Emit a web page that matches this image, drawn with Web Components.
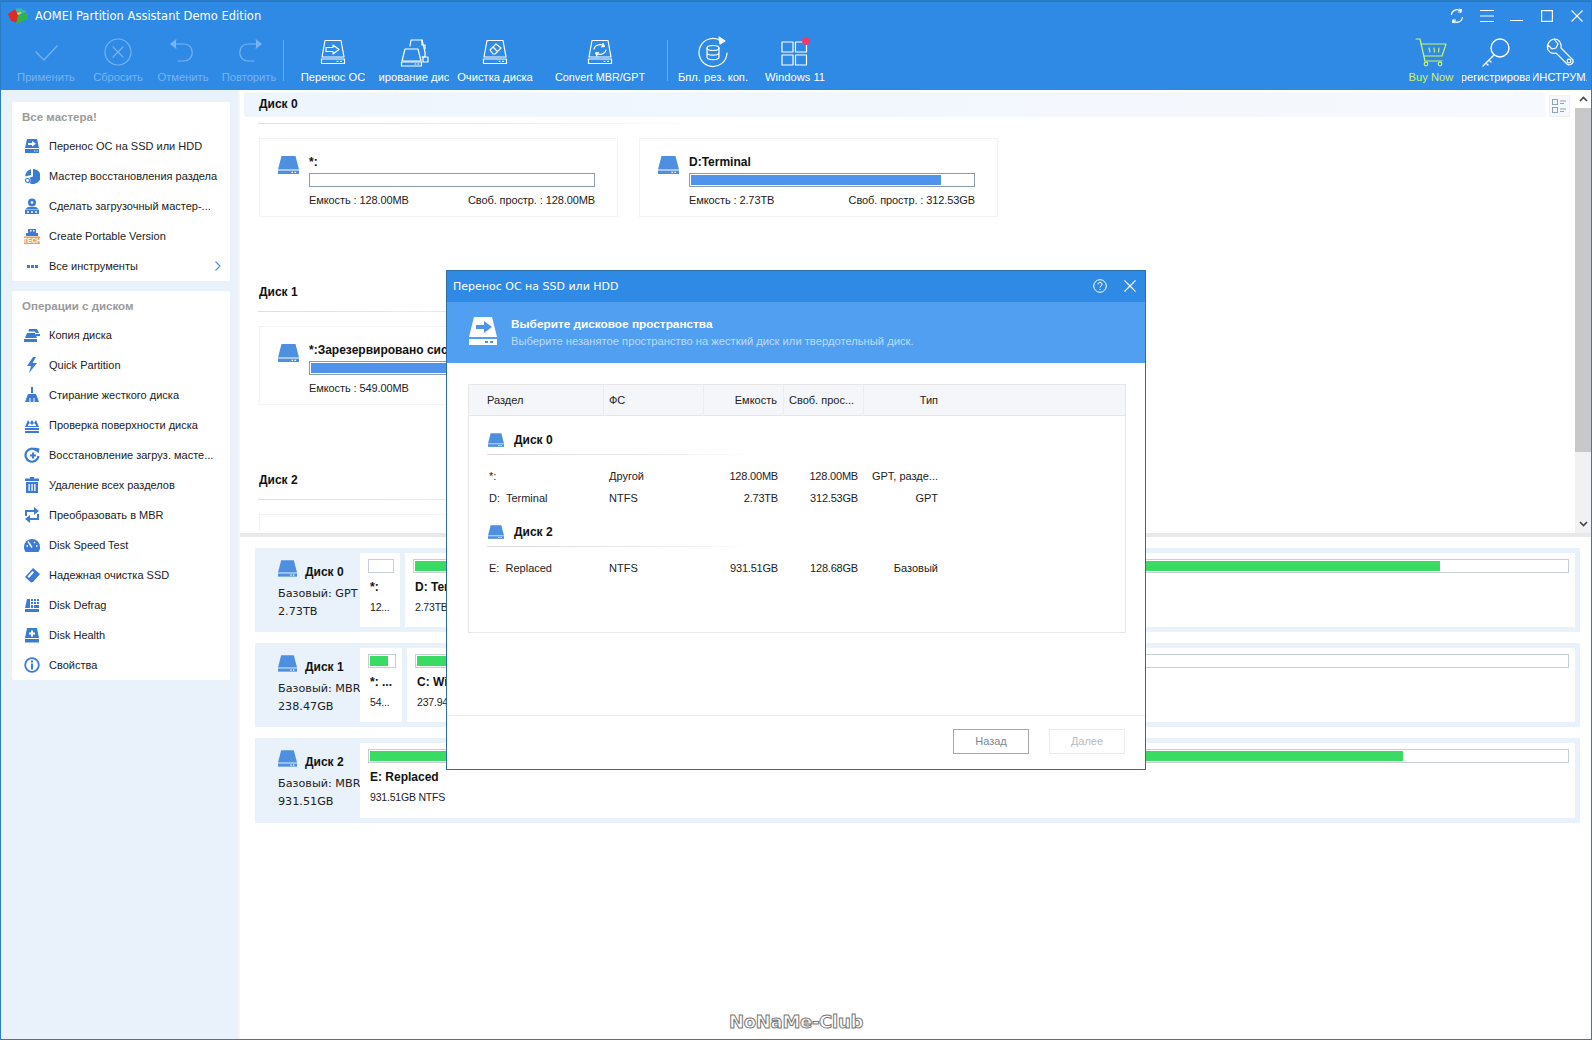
<!DOCTYPE html>
<html lang="ru">
<head>
<meta charset="utf-8">
<title>AOMEI Partition Assistant</title>
<style>
  html, body { margin: 0; padding: 0; background: #fff; }
  body { font: 11px "Liberation Sans", sans-serif; color: #222; }
</style>
</head>
<body>
<partition-app>
  <app-titlebar slot="top">AOMEI Partition Assistant Demo Edition</app-titlebar>
  <app-toolbar slot="top">
    <tool-item icon="check" off style="width:64px;margin-left:14px">Применить</tool-item>
    <tool-item icon="cancel" off style="width:64px;margin-left:8px">Сбросить</tool-item>
    <tool-item icon="undo" off style="width:64px;margin-left:1px">Отменить</tool-item>
    <tool-item icon="redo" off style="width:64px;margin-left:2px">Повторить</tool-item>
    <tool-sep style="margin-left:2px"></tool-sep>
    <tool-item icon="migrate" style="width:64px;margin-left:17px">Перенос ОС</tool-item>
    <tool-item icon="clone" style="width:70px;margin-left:14px">ирование дис</tool-item>
    <tool-item icon="wipe" style="width:76px;margin-left:8px">Очистка диска</tool-item>
    <tool-item icon="convert" style="width:92px;margin-left:21px;font-size:10.8px">Convert MBR/GPT</tool-item>
    <tool-sep style="margin-left:21px"></tool-sep>
    <tool-item icon="backup" style="width:74px;margin-left:8px">Бпл. рез. коп.</tool-item>
    <tool-item icon="win" style="width:60px;margin-left:15px">Windows 11</tool-item>
    <tool-item icon="cart" accent style="width:46px;margin-left:auto">Buy Now</tool-item>
    <tool-item icon="key" style="width:68px;margin-left:8px">регистрирова</tool-item>
    <tool-item icon="wrench" style="width:54px;margin-left:3px;margin-right:5px">ИНСТРУМ.</tool-item>
  </app-toolbar>

  <app-sidebar slot="side">
    <side-card title="Все мастера!">
      <side-row icon="sMigrate">Перенос ОС на SSD или HDD</side-row>
      <side-row icon="sPie">Мастер восстановления раздела</side-row>
      <side-row icon="sBoot">Сделать загрузочный мастер-...</side-row>
      <side-row icon="sTech">Create Portable Version</side-row>
      <side-row icon="sDots" more>Все инструменты</side-row>
    </side-card>
    <side-card title="Операции с диском">
      <side-row icon="sCopy">Копия диска</side-row>
      <side-row icon="sBolt">Quick Partition</side-row>
      <side-row icon="sBroom">Стирание жесткого диска</side-row>
      <side-row icon="sSurface">Проверка поверхности диска</side-row>
      <side-row icon="sRestore">Восстановление загруз. масте...</side-row>
      <side-row icon="sTrash">Удаление всех разделов</side-row>
      <side-row icon="sSwap">Преобразовать в MBR</side-row>
      <side-row icon="sGauge">Disk Speed Test</side-row>
      <side-row icon="sEraser">Надежная очистка SSD</side-row>
      <side-row icon="sDefrag">Disk Defrag</side-row>
      <side-row icon="sHealth">Disk Health</side-row>
      <side-row icon="sInfo">Свойства</side-row>
    </side-card>
  </app-sidebar>

  <top-pane slot="main">
    <disk-section title="Диск 0" band>
      <part-card name="*:" fill="0" size="128.00MB" free="128.00MB"></part-card>
      <part-card name="D:Terminal" fill="88.5" size="2.73TB" free="312.53GB"></part-card>
    </disk-section>
    <disk-section title="Диск 1">
      <part-card name="*:Зарезервировано системой" fill="75" size="549.00MB" free="120.00MB"></part-card>
    </disk-section>
    <disk-section title="Диск 2">
      <part-card></part-card>
    </disk-section>
  </top-pane>

  <bottom-pane slot="main">
    <disk-map name="Диск 0" kind="Базовый: GPT" cap="2.73TB" h="84">
      <map-part style="width:40px" name="*:" info="12..." fill="0"></map-part>
      <map-part style="flex:1" name="D: Terminal" info="2.73TB NTFS" fill="89"></map-part>
    </disk-map>
    <disk-map name="Диск 1" kind="Базовый: MBR" cap="238.47GB" h="84">
      <map-part style="width:42px" name="*: ..." info="54..." fill="75"></map-part>
      <map-part style="flex:1" name="C: Windows" info="237.94GB NTFS" fill="40"></map-part>
    </disk-map>
    <disk-map name="Диск 2" kind="Базовый: MBR" cap="931.51GB" h="85">
      <map-part style="flex:1" wide name="E: Replaced" info="931.51GB NTFS" fill="86.3"></map-part>
    </disk-map>
  </bottom-pane>

  <migrate-dialog slot="over" title="Перенос ОС на SSD или HDD"
    heading="Выберите дисковое пространства"
    sub="Выберите незанятое пространство на жесткий диск или твердотельный диск.">
    <table-group name="Диск 0" style="margin-top:16px"></table-group>
    <table-line style="margin-top:10px" a="*:" b="Другой" c="128.00MB" d="128.00MB" e="GPT, разде..."></table-line>
    <table-line a="D:  Terminal" b="NTFS" c="2.73TB" d="312.53GB" e="GPT"></table-line>
    <table-group name="Диск 2" style="margin-top:15px"></table-group>
    <table-line style="margin-top:10px" a="E:  Replaced" b="NTFS" c="931.51GB" d="128.68GB" e="Базовый"></table-line>
  </migrate-dialog>
  <water-mark slot="over">NoNaMe-Club</water-mark>
</partition-app>

<script>
const line = (inner, w) => `<g fill="none" stroke="currentColor" stroke-width="${w || 1.2}" stroke-linecap="round" stroke-linejoin="round">${inner}</g>`;
const diskOutline = `<path d="M8 4.5H24L27 21H5Z"/><rect x="4.5" y="23" width="23" height="4.5"/><path d="M20 25.3h1M23.5 25.3h1"/>`;

const toolIcons = {
  check: line(`<path d="M6 16l8 8L27 10"/>`),
  cancel: line(`<circle cx="16" cy="16" r="13"/><path d="M11 11l10 10M21 11L11 21"/>`),
  undo: line(`<path d="M4 8H17C28 8 28 25 17 25H11"/><path d="M9 4L4 8l5 4" fill="currentColor"/>`),
  redo: line(`<path d="M28 8H15C4 8 4 25 15 25H21"/><path d="M23 4l5 4-5 4" fill="currentColor"/>`),
  migrate: line(diskOutline + `<path d="M9 11.5h7V9l6 4.5-6 4.5v-2.5H9Z"/>`),
  clone: line(`<path d="M7 13H20L23 25H4Z"/><rect x="3.500" y="26" width="20" height="4"/><path d="M17 28h1M20 28h1"/><path d="M12 10L13 4H24L27 16V21H24"/><path d="M24 4V9H27V13"/><rect x="25" y="21" width="5" height="5"/>`),
  wipe: line(diskOutline + `<path d="M11 14l6-6 5 4-6 6h-2Z"/><path d="M14 11l4 4"/>`),
  convert: line(diskOutline + `<path d="M10 13a6 5 0 0 1 10-3"/><path d="M22 14a6 5 0 0 1-10 3"/><path d="M19 7.500l1.500 3-3 .5" fill="currentColor"/><path d="M13 20l-1.500-3 3-.5" fill="currentColor"/>`),
  backup: line(`<path d="M24 5A14 14 0 1 0 30 17"/><path d="M22 1l6 4-5 3Z" fill="currentColor"/><ellipse cx="16" cy="12" rx="6" ry="2.500"/><path d="M10 12v9c0 3.500 12 3.500 12 0v-9M10 16.500c0 3.500 12 3.500 12 0"/>`),
  win: line(`<rect x="3" y="6" width="11" height="10"/><rect x="16.500" y="6" width="11" height="10"/><rect x="3" y="19" width="11" height="10"/><rect x="16.500" y="19" width="11" height="10"/>`) + `<circle cx="27" cy="5" r="4" fill="#f23a6a"/>`,
  cart: line(`<path d="M1 3H5L10 25H27"/><path d="M6 8H31L27 20H9"/><path d="M14 12l1 4M19 12l.5 4M24 12l-.5 4"/><circle cx="11" cy="28" r="1.800"/><circle cx="25" cy="28" r="1.800"/>`),
  key: line(`<circle cx="20" cy="12" r="9"/><path d="M14 19L3 30M6 27l2 2M9 24l2 2"/>`, 1.4),
  wrench: line(`<path d="M11 3a8 8 0 0 0-7 11c2 3 5 4 8 3l11 11c2 2 7 0 6-4L17 12c1-4-2-9-6-9l-1 0 4 5-2 4-4 1-4-4"/><circle cx="25" cy="25" r="1.800"/>`)
};

const F = 'fill="#3b7bd4"';
const sideIcons = {
  sMigrate: `<path ${F} d="M3 1H13L15 10H1Z"/><path fill="#fff" d="M4 5h4V3l4 2.700-4 2.700V7H4Z"/><rect ${F} x="1" y="11" width="14" height="4"/><path fill="#fff" d="M10 12.500h1.200v1H10ZM12.500 12.500h1.200v1h-1.200Z"/>`,
  sPie: `<path ${F} d="M9 1A7.500 7.500 0 1 1 2 11L9 8.500Z"/><path ${F} d="M7 1.200V7L1.300 8.500A7 7 0 0 1 7 1.200Z"/><circle cx="3.500" cy="12.500" r="3" fill="#fff"/><circle cx="3.500" cy="12.500" r="2" fill="none" stroke="#3b7bd4" stroke-width="1.200"/>`,
  sBoot: `<circle ${F} cx="8" cy="4.500" r="4"/><circle cx="8" cy="4.500" r="1.300" fill="#fff"/><path ${F} d="M4 9h8l3 2.500H1Z"/><rect ${F} x="1" y="12" width="14" height="4"/><path fill="#fff" d="M3 13.300h2v1.400H3ZM7 13.300h2v1.400H7ZM11 13.300h2v1.400h-2Z"/>`,
  sTech: `<path ${F} d="M4 1h8v4h2v3H2V5h2Z"/><path fill="#fff" d="M6 2h1.500v1.500H6ZM9 2h1.500v1.500H9Z"/><rect fill="#eda23f" x="0" y="8.500" width="16" height="7.500"/><text x="8" y="15" text-anchor="middle" font-size="6.500" font-weight="700" font-family="Liberation Sans" fill="#fff">TECH</text>`,
  sDots: `<rect ${F} x="3" y="7" width="3" height="3"/><rect ${F} x="7" y="7" width="3" height="3"/><rect ${F} x="11" y="7" width="3" height="3"/>`,
  sCopy: `<path ${F} d="M3 6H11L13 11H1Z"/><rect ${F} x="0" y="12" width="13" height="3"/><path ${F} d="M5 2H13L15 6H12L11 4.500H4.500Z"/><rect ${F} x="12" y="7" width="4" height="2"/>`,
  sBolt: `<path ${F} d="M9 0L3 9H7L5 16L13 6H8.500L12 0Z"/>`,
  sBroom: `<path ${F} d="M7 0h2v6H7Z"/><path ${F} d="M4 7h8l3 8H1Z"/><path fill="#fff" d="M5.500 11h1v4h-1ZM9.500 11h1v4h-1Z"/>`,
  sSurface: `<path ${F} d="M1 10L4 3l2 3 2-3 2 3 2-3 3 7Z"/><path fill="#fff" d="M4 8l2-2 2 2 2-2 2 2v1H4Z"/><rect ${F} x="1" y="11" width="14" height="2"/><rect ${F} x="1" y="14" width="14" height="2"/>`,
  sRestore: `<path fill="none" stroke="#3b7bd4" stroke-width="2.200" d="M13 4A6.500 6.500 0 1 0 14.500 9"/><path ${F} d="M10 .500l5.500 1-1 5Z"/><path ${F} d="M6 7.500h2V5.500h2v2h2v2h-2v2H8v-2H6Z"/>`,
  sTrash: `<path ${F} d="M6 0h4v1.500h5V4H1V1.500h5Z"/><path ${F} d="M2 5h12v11H2Z"/><path fill="#fff" d="M4.500 7h1.300v7H4.500ZM7.400 7h1.300v7H7.400ZM10.200 7h1.300v7h-1.300Z"/>`,
  sSwap: `<path fill="none" stroke="#3b7bd4" stroke-width="2" d="M2 9V4H11M14 7v5H5"/><path ${F} d="M10 0l5 4-5 4ZM6 8l-5 4 5 4Z"/>`,
  sGauge: `<path ${F} d="M8 2a8 8 0 0 1 8 8c0 2-.5 3.500-1.500 5H1.500C.500 13.500 0 12 0 10a8 8 0 0 1 8-8Z"/><path fill="none" stroke="#fff" stroke-width="1.400" d="M4 4.500l4 6M2.500 9h1.500M12 9h1.500M11 5l-1 1"/>`,
  sEraser: `<path ${F} d="M9 1l7 6-7 8-2 .500L1 10Z"/><path fill="#fff" d="M3.500 9.500L8.500 4l1.500 1.300-5 5.700Z"/>`,
  sDefrag: `<path ${F} d="M3 2h3v9H1Z"/><rect ${F} x="1" y="12" width="14" height="3"/><path ${F} d="M7 2h2v2H7ZM10 2h2v2h-2ZM13 2h2v2h-2ZM7 5h2v2H7ZM10 5h2v2h-2ZM13 5h2v2h-2ZM7 8h2v3H7ZM10 8h5v3h-5Z"/>`,
  sHealth: `<path ${F} d="M3 1H13L15 11H1Z"/><path fill="#fff" d="M7 3.500h2v2h2v2H9v2H7v-2H5v-2h2Z"/><rect ${F} x="1" y="12" width="14" height="3.500"/>`,
  sInfo: `<circle cx="8" cy="8" r="6.800" fill="none" stroke="#3b7bd4" stroke-width="1.800"/><rect ${F} x="7" y="3.500" width="2" height="2"/><rect ${F} x="7" y="6.500" width="2" height="6"/>`
};

const diskGlyph = (color, w, h) => `<svg width="${w}" height="${h}" viewBox="0 0 21 18" style="display:block;flex:none"><path fill="${color}" d="M3.500 0H17.500L21 13.500H0Z"/><rect fill="${color}" x="0" y="14.500" width="21" height="3.500"/><path fill="#fff" d="M13.500 15.700h1.500v1.200h-1.500ZM16.500 15.700h1.500v1.200h-1.500Z"/></svg>`;

class PartitionApp extends HTMLElement {
  connectedCallback() {
    this.attachShadow({ mode: 'open' });
    this.shadowRoot.innerHTML = `
      <style>
        :host { display: flex; flex-direction: column; position: relative; width: 1592px; height: 1040px; overflow: hidden; background: #fff; outline: 1px solid #2a7cc4; outline-offset: -1px; }
        .top { flex: none; background: #2f8ae6; border-top: 2px solid #1e78d8; box-sizing: border-box; height: 90px; display: flex; flex-direction: column; }
        .body { flex: 1; display: flex; min-height: 0; }
        .main { flex: 1; display: flex; flex-direction: column; min-width: 0; }
      </style>
      <div class="top"><slot name="top"></slot></div>
      <div class="body">
        <slot name="side"></slot>
        <div class="main"><slot name="main"></slot></div>
      </div>
      <slot name="over"></slot>
    `;
  }
}

class AppTitlebar extends HTMLElement {
  connectedCallback() {
    this.attachShadow({ mode: 'open' });
    this.shadowRoot.innerHTML = `
      <style>
        :host { display: flex; align-items: center; height: 28px; flex: none; color: #fff; font: 12px "DejaVu Sans", sans-serif; }
        .logo { margin-left: 8px; margin-right: 7px; }
        .name { flex: 1; font-size: 11.5px; }
        .btn { width: 30px; height: 28px; display: flex; align-items: center; justify-content: center; }
        svg { display: block; }
      </style>
      <svg class="logo" width="20" height="17" viewBox="0 0 20 17">
        <path fill="#e02a2a" d="M0 6l7-5 4 1-1 13-7-2Z"/>
        <path fill="#2fb34a" d="M8 16l2-9 10-2v6Z"/>
        <path fill="#39b7a9" d="M7 1l5-1 7 4-9 3Z"/>
        <path fill="#e8d23a" d="M9 5l3-1 2 1-4 2Z"/>
      </svg>
      <span class="name"><slot></slot></span>
      <div class="btn"><svg width="16" height="16" viewBox="0 0 16 16" fill="none" stroke="#fff" stroke-width="1.200"><path d="M2.500 7A5.500 5.500 0 0 1 12 3.500"/><path d="M13.500 9A5.500 5.500 0 0 1 4 12.500"/><path d="M10 .5l3 1-1 3.500M6 15.500l-3-1 1-3.500" fill="#fff" stroke="none"/><path d="M12 1v3H9M4 15v-3h3"/></svg></div>
      <div class="btn"><svg width="14" height="12" viewBox="0 0 14 12" stroke="#fff" stroke-width="1"><path d="M0 .5h14M0 6h14M0 11.500h14"/></svg></div>
      <div class="btn"><svg width="14" height="14" viewBox="0 0 14 14" stroke="#fff" stroke-width="1"><path d="M0 11.500h13"/></svg></div>
      <div class="btn"><svg width="12" height="12" viewBox="0 0 12 12" fill="none" stroke="#fff" stroke-width="1.200"><rect x=".6" y=".6" width="10.800" height="10.800"/></svg></div>
      <div class="btn"><svg width="12" height="12" viewBox="0 0 12 12" fill="none" stroke="#fff" stroke-width="1.100"><path d="M.5.5l11 11M11.500.5l-11 11"/></svg></div>
    `;
  }
}

class AppToolbar extends HTMLElement {
  connectedCallback() {
    this.attachShadow({ mode: 'open' });
    this.shadowRoot.innerHTML = `
      <style>:host { display: flex; flex: 1; align-items: flex-start; padding-top: 6px; min-height: 0; }</style>
      <slot></slot>
    `;
  }
}

class ToolItem extends HTMLElement {
  connectedCallback() {
    const off = this.hasAttribute('off');
    const accent = this.hasAttribute('accent');
    this.attachShadow({ mode: 'open' });
    this.shadowRoot.innerHTML = `
      <style>
        :host { display: flex; flex-direction: column; align-items: center; flex: none; color: ${off ? '#78b3f0' : accent ? '#cdf36a' : '#fff'}; font: 11.2px "Liberation Sans", sans-serif; }
        svg { display: block; flex: none; }
        .label { align-self: stretch; display: flex; justify-content: center; overflow: hidden; white-space: nowrap; height: 14px; line-height: 14px; margin-top: 2px; }
      </style>
      <svg width="32" height="32" viewBox="0 0 32 32">${toolIcons[this.getAttribute('icon')]}</svg>
      <div class="label"><slot></slot></div>
    `;
  }
}

class ToolSep extends HTMLElement {
  connectedCallback() {
    this.attachShadow({ mode: 'open' });
    this.shadowRoot.innerHTML = `<style>:host { display: block; flex: none; width: 1px; height: 41px; margin-top: 4px; background: rgba(255,255,255,.28); }</style>`;
  }
}

class AppSidebar extends HTMLElement {
  connectedCallback() {
    this.attachShadow({ mode: 'open' });
    this.shadowRoot.innerHTML = `
      <style>
        :host { display: flex; flex-direction: column; gap: 10px; flex: none; box-sizing: border-box; width: 240px; padding: 12px 8px 0 12px; background: #e9f1fb; border-right: 2px solid #f3f7fc; }
      </style>
      <slot></slot>
    `;
  }
}

class SideCard extends HTMLElement {
  connectedCallback() {
    this.attachShadow({ mode: 'open' });
    this.shadowRoot.innerHTML = `
      <style>
        :host { display: block; background: #fff; border-radius: 2px; }
        .head { height: 29px; padding-left: 10px; color: #9a9a9a; font: 700 11.5px/31px "Liberation Sans", sans-serif; }
      </style>
      <div class="head">${this.getAttribute('title')}</div>
      <slot></slot>
    `;
    this.removeAttribute('title');
  }
}

class SideRow extends HTMLElement {
  connectedCallback() {
    const more = this.hasAttribute('more');
    this.attachShadow({ mode: 'open' });
    this.shadowRoot.innerHTML = `
      <style>
        :host { display: flex; align-items: center; height: 30px; padding-left: 12px; font: 11px "Liberation Sans", sans-serif; color: #222; white-space: nowrap; }
        svg.i { display: block; flex: none; margin-right: 9px; }
        .t { flex: 1; }
        .more { margin-right: 9px; }
      </style>
      <svg class="i" width="16" height="16" viewBox="0 0 16 16">${sideIcons[this.getAttribute('icon')]}</svg>
      <span class="t"><slot></slot></span>
      ${more ? `<svg class="more" width="6" height="10" viewBox="0 0 6 10" fill="none" stroke="#4a90d9" stroke-width="1.100"><path d="M.5.5L5 5 .5 9.500"/></svg>` : ''}
    `;
  }
}

class TopPane extends HTMLElement {
  connectedCallback() {
    this.attachShadow({ mode: 'open' });
    this.shadowRoot.innerHTML = `
      <style>
        :host { display: flex; flex: none; height: 443px; border-bottom: 4px solid #e9e9e9; overflow: hidden; background: #fff; }
        .content { flex: 1; min-width: 0; padding-top: 2px; box-sizing: border-box; height: 441px; overflow: hidden; }
        .view { flex: none; width: 29px; padding-top: 5px; box-sizing: border-box; }
        .view div { width: 21px; height: 22px; margin-left: 3px; background: #f5f8fd; border: 1px solid #edf1f7; box-sizing: border-box; display: flex; align-items: center; justify-content: center; }
        .bar { flex: none; width: 17px; display: flex; flex-direction: column; background: #f1f1f1; }
        .cap { height: 18px; display: flex; align-items: center; justify-content: center; background: #fff; flex: none; }
        .thumb { height: 344px; background: #c8c8c8; flex: none; }
        .rest { flex: 1; }
        svg { display: block; }
      </style>
      <div class="content"><slot></slot></div>
      <div class="view"><div>
        <svg width="15" height="14" viewBox="0 0 15 14" fill="none" stroke="#8ea2b8"><rect x=".5" y=".5" width="5" height="5"/><rect x=".5" y="8.500" width="5" height="5"/><path d="M8 2h6M8 4.500h4M8 10h6M8 12.500h4"/></svg>
      </div></div>
      <div class="bar">
        <div class="cap"><svg width="9" height="6" viewBox="0 0 9 6" fill="none" stroke="#444" stroke-width="1.600"><path d="M1 5l3.500-3.500L8 5"/></svg></div>
        <div class="thumb"></div>
        <div class="rest"></div>
        <div class="cap" style="background:#f1f1f1"><svg width="9" height="6" viewBox="0 0 9 6" fill="none" stroke="#444" stroke-width="1.600"><path d="M1 1l3.500 3.500L8 1"/></svg></div>
      </div>
    `;
  }
}

class DiskSection extends HTMLElement {
  connectedCallback() {
    const band = this.hasAttribute('band');
    this.attachShadow({ mode: 'open' });
    this.shadowRoot.innerHTML = `
      <style>
        :host { display: block; height: 188px; }
        .title { height: 25px; margin-left: 4px; padding-left: 15px; font: 700 12px/25px "Liberation Sans", sans-serif; color: #111; border-radius: 3px; background: ${band ? 'linear-gradient(90deg,#eef5fd,#f6f9fe)' : 'transparent'}; }
        .rule { height: 1px; width: 460px; margin: 6px 0 14px 18px; background: linear-gradient(90deg,#dedede,#eee 60%,#fff); }
        .cards { display: flex; gap: 21px; margin-left: 19px; }
      </style>
      <div class="title">${this.getAttribute('title')}</div>
      <div class="rule"></div>
      <div class="cards"><slot></slot></div>
    `;
    this.removeAttribute('title');
  }
}

class PartCard extends HTMLElement {
  connectedCallback() {
    const a = n => this.getAttribute(n);
    this.attachShadow({ mode: 'open' });
    const box = `:host { display: flex; flex: none; box-sizing: border-box; width: 359px; height: 79px; padding: 17px 0 0 18px; border: 1px solid #f3f3f3; font: 11px "Liberation Sans", sans-serif; color: #222; }`;
    if (!this.hasAttribute('name')) {
      // only the top edge of this card shows above the splitter
      this.shadowRoot.innerHTML = `<style>${box}</style>`;
      return;
    }
    this.shadowRoot.innerHTML = `
      <style>
        ${box}
        .col { margin-left: 10px; width: 286px; }
        .name { height: 14px; margin-top: -1px; font: 700 12px/14px "Liberation Sans", sans-serif; color: #111; white-space: nowrap; }
        .bar { height: 14px; margin-top: 4px; box-sizing: border-box; border: 1px solid #8b9ba8; padding: 1px; background: #fff; }
        .bar div { height: 100%; background: #4f94ea; }
        .nums { display: flex; justify-content: space-between; margin-top: 6px; line-height: 14px; white-space: nowrap; letter-spacing: -.1px; }
      </style>
      ${diskGlyph('#4f8fe0', 21, 18)}
      <div class="col">
        <div class="name">${a('name')}</div>
        <div class="bar"><div style="width:${a('fill')}%"></div></div>
        <div class="nums"><span>Емкость : ${a('size')}</span><span>Своб. простр. : ${a('free')}</span></div>
      </div>
    `;
  }
}

class BottomPane extends HTMLElement {
  connectedCallback() {
    this.attachShadow({ mode: 'open' });
    this.shadowRoot.innerHTML = `
      <style>:host { display: flex; flex-direction: column; flex: 1; gap: 11px; padding: 11px 12px 0 15px; }</style>
      <slot></slot>
    `;
  }
}

class DiskMap extends HTMLElement {
  connectedCallback() {
    const a = n => this.getAttribute(n);
    this.attachShadow({ mode: 'open' });
    this.shadowRoot.innerHTML = `
      <style>
        :host { display: flex; flex: none; box-sizing: border-box; height: ${a('h')}px; background: #e9f1fb; padding: 5px 5px 5px 0; font: 11.2px "DejaVu Sans", sans-serif; color: #222; }
        .info { flex: none; box-sizing: border-box; width: 105px; padding: 7px 0 0 23px; overflow: hidden; white-space: nowrap; }
        .head { display: flex; align-items: flex-start; height: 19px; }
        .head b { margin: 5px 0 0 8px; font: 700 12px/14px "Liberation Sans", sans-serif; color: #111; }
        .l { line-height: 18px; }
        .l.first { margin-top: 6px; }
        .parts { flex: 1; display: flex; gap: 5px; min-width: 0; }
      </style>
      <div class="info">
        <div class="head">${diskGlyph('#4f8fe0', 19, 17)}<b>${a('name')}</b></div>
        <div class="l first">${a('kind')}</div>
        <div class="l">${a('cap')}</div>
      </div>
      <div class="parts"><slot></slot></div>
    `;
  }
}

class MapPart extends HTMLElement {
  connectedCallback() {
    const a = n => this.getAttribute(n);
    this.attachShadow({ mode: 'open' });
    this.shadowRoot.innerHTML = `
      <style>
        :host { display: block; box-sizing: border-box; background: #fff; padding: 6px 6px 0 8px; min-width: 0; overflow: hidden; white-space: nowrap; font: 10.5px "Liberation Sans", sans-serif; color: #222; }
        .bar { height: 14px; box-sizing: border-box; border: 1px solid #c6cfd4; padding: 1px; }
        .bar div { height: 100%; background: #3adb62; }
        .n { margin: 7px 0 0 2px; height: 14px; font: 700 12px/14px "Liberation Sans", sans-serif; color: #111; }
        .s { margin: 6px 0 0 2px; line-height: 14px; letter-spacing: -.2px; }
      </style>
      <div class="bar"><div style="width:${a('fill')}%"></div></div>
      <div class="n">${a('name')}</div>
      <div class="s">${a('info')}</div>
    `;
  }
}

class MigrateDialog extends HTMLElement {
  connectedCallback() {
    const a = n => this.getAttribute(n);
    this.attachShadow({ mode: 'open' });
    this.shadowRoot.innerHTML = `
      <style>
        :host { position: absolute; left: 446px; top: 270px; width: 700px; height: 500px; box-sizing: border-box; border: 1px solid #2b6da6; background: #fff; display: flex; flex-direction: column; font: 11px "Liberation Sans", sans-serif; color: #222; }
        .title { flex: none; display: flex; align-items: center; box-sizing: border-box; height: 31px; padding: 0 0 2px 6px; background: #2f8ae6; color: #fff; }
        .title span { flex: 1; margin-top: 2px; font: 11px "DejaVu Sans", sans-serif; }
        .title svg { display: block; }
        .banner { flex: none; display: flex; height: 61px; background: #519ff0; box-sizing: border-box; padding: 15px 0 0 22px; }
        .banner .txt { margin-left: 14px; }
        .banner b { display: block; color: #fff; font: 700 11.800px/14px "Liberation Sans", sans-serif; margin-top: 0; }
        .banner small { display: block; color: #bcdcfb; font-size: 11.200px; line-height: 14px; margin-top: 3px; white-space: nowrap; }
        .table { flex: none; margin: 21px 19px 0 21px; height: 249px; box-sizing: border-box; border: 1px solid #e6e6e6; }
        .thead { display: grid; grid-template-columns: 135px 100px 80px 80px 82px; height: 30px; background: #f4f6fa; border-bottom: 1px solid #e2e6ea; box-sizing: content-box; line-height: 31px; }
        .thead div { border-right: 1px solid #e9ecf0; padding: 0 6px 0 5px; white-space: nowrap; }
        .thead div:first-child { padding-left: 18px; }
        .thead div:last-child { border-right: 0; text-align: right; padding-right: 8px; }
        .r { text-align: right; }
        .foot { margin-top: auto; height: 54px; flex: none; box-sizing: border-box; border-top: 1px solid #ececec; display: flex; justify-content: flex-end; gap: 20px; padding: 13px 20px 0 0; }
        .b { width: 76px; height: 25px; box-sizing: border-box; text-align: center; line-height: 23px; }
        .back { border: 1px solid #a8a8a8; color: #7a8a96; }
        .next { border: 1px solid #ececec; color: #b6bcc2; }
      </style>
      <div class="title">
        <span>${a('title')}</span>
        <svg width="14" height="14" viewBox="0 0 14 14" fill="none" stroke="#fff" style="margin-right:17px"><circle cx="7" cy="7" r="6.300"/><path d="M5 5.300a2 2 0 1 1 2.800 1.900c-.6.300-.8.600-.8 1.300M7 10v1"/></svg>
        <svg width="12" height="12" viewBox="0 0 12 12" fill="none" stroke="#fff" stroke-width="1.100" style="margin-right:9px"><path d="M.5.5l11 11M11.500.5l-11 11"/></svg>
      </div>
      <div class="banner">
        <svg width="28" height="28" viewBox="0 0 28 28" style="display:block;flex:none">
          <path fill="#fff" d="M5 0H23L28 20H0Z"/>
          <path fill="#4f94ea" d="M7 8h8V4l8 6-8 6v-4H7Z"/>
          <rect fill="#fff" y="22" width="28" height="6"/>
          <path fill="#4f94ea" d="M16 24h3v2h-3ZM21 24h3v2h-3Z"/>
        </svg>
        <div class="txt"><b>${a('heading')}</b><small>${a('sub')}</small></div>
      </div>
      <div class="table">
        <div class="thead">
          <div>Раздел</div><div>ФС</div><div class="r">Емкость</div><div>Своб. прос...</div><div>Тип</div>
        </div>
        <slot></slot>
      </div>
      <div class="foot"><div class="b back">Назад</div><div class="b next">Далее</div></div>
    `;
  }
}

class TableGroup extends HTMLElement {
  connectedCallback() {
    this.attachShadow({ mode: 'open' });
    this.shadowRoot.innerHTML = `
      <style>
        :host { display: block; font: 700 12px "Liberation Sans", sans-serif; color: #111; }
        .h { display: flex; align-items: center; height: 16px; margin-left: 19px; }
        .h span { margin: -1px 0 0 10px; }
        .rule { height: 1px; width: 268px; margin: 6px 0 0 18px; background: linear-gradient(90deg,#d8d8d8,#eee 70%,#fff); }
      </style>
      <div class="h">${diskGlyph('#4f8fe0', 16, 14)}<span>${this.getAttribute('name')}</span></div>
      <div class="rule"></div>
    `;
  }
}

class TableLine extends HTMLElement {
  connectedCallback() {
    const a = n => this.getAttribute(n);
    this.attachShadow({ mode: 'open' });
    this.shadowRoot.innerHTML = `
      <style>
        :host { display: grid; grid-template-columns: 135px 100px 80px 80px 82px; height: 22px; line-height: 22px; white-space: pre; }
        div { padding: 0 6px 0 5px; }
        .a { padding-left: 20px; }
        .r { text-align: right; letter-spacing: -.2px; }
        .e { text-align: right; padding-right: 8px; }
      </style>
      <div class="a">${a('a')}</div><div>${a('b')}</div><div class="r">${a('c')}</div><div class="r">${a('d')}</div><div class="e">${a('e')}</div>
    `;
  }
}

class WaterMark extends HTMLElement {
  connectedCallback() {
    this.attachShadow({ mode: 'open' });
    this.shadowRoot.innerHTML = `
      <style>
        :host { position: absolute; left: 700px; width: 192px; top: 1010px; text-align: center; font: 700 18px/24px "DejaVu Sans", sans-serif; color: #fff; -webkit-text-stroke: 1px #777; letter-spacing: -.3px; }
      </style>
      <slot></slot>
    `;
  }
}

customElements.define('partition-app', PartitionApp);
customElements.define('app-titlebar', AppTitlebar);
customElements.define('app-toolbar', AppToolbar);
customElements.define('tool-item', ToolItem);
customElements.define('tool-sep', ToolSep);
customElements.define('app-sidebar', AppSidebar);
customElements.define('side-card', SideCard);
customElements.define('side-row', SideRow);
customElements.define('top-pane', TopPane);
customElements.define('disk-section', DiskSection);
customElements.define('part-card', PartCard);
customElements.define('bottom-pane', BottomPane);
customElements.define('disk-map', DiskMap);
customElements.define('map-part', MapPart);
customElements.define('migrate-dialog', MigrateDialog);
customElements.define('table-group', TableGroup);
customElements.define('table-line', TableLine);
customElements.define('water-mark', WaterMark);
</script>
</body>
</html>
